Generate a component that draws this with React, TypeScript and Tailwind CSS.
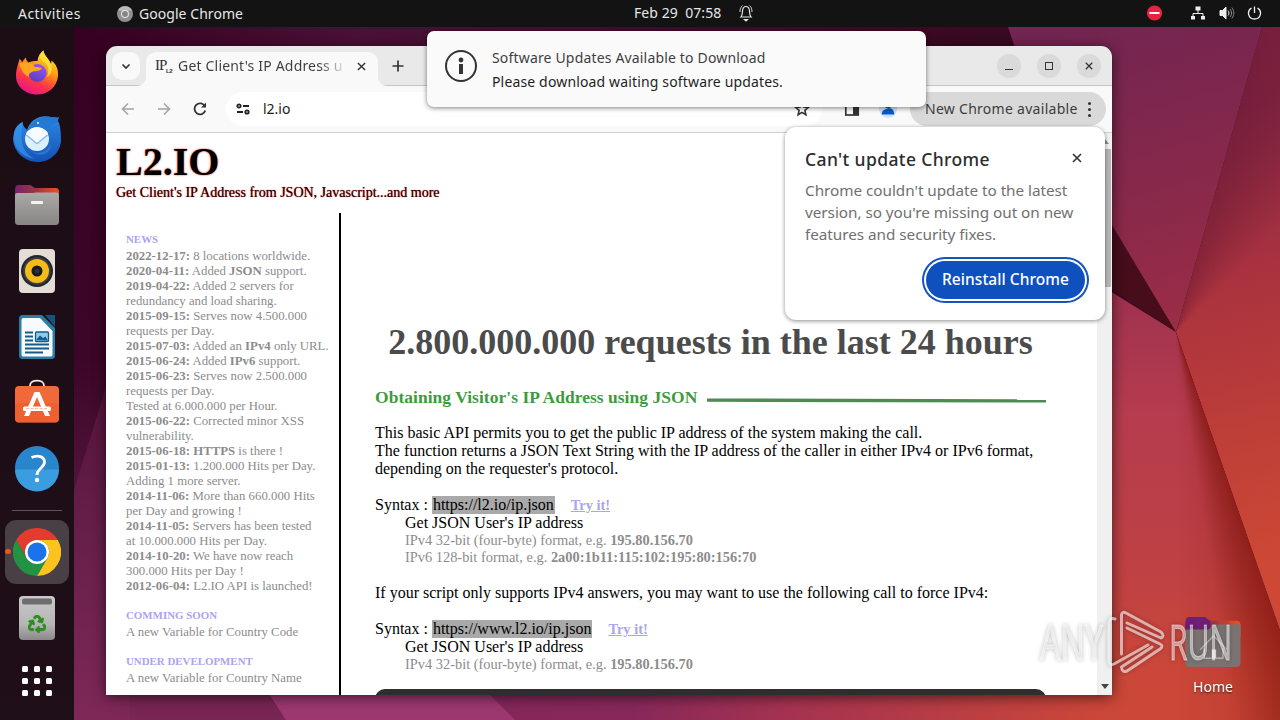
import React from 'react';
import { FaRecycle } from 'react-icons/fa';

interface NewsLine {
  date?: string;
  text: React.ReactNode;
}

const news: NewsLine[] = [
  { date: '2022-12-17:', text: ' 8 locations worldwide.' },
  { date: '2020-04-11:', text: <> Added <b>JSON</b> support.</> },
  { date: '2019-04-22:', text: ' Added 2 servers for' },
  { text: 'redundancy and load sharing.' },
  { date: '2015-09-15:', text: ' Serves now 4.500.000' },
  { text: 'requests per Day.' },
  { date: '2015-07-03:', text: <> Added an <b>IPv4</b> only URL.</> },
  { date: '2015-06-24:', text: <> Added <b>IPv6</b> support.</> },
  { date: '2015-06-23:', text: ' Serves now 2.500.000' },
  { text: 'requests per Day.' },
  { text: 'Tested at 6.000.000 per Hour.' },
  { date: '2015-06-22:', text: ' Corrected minor XSS' },
  { text: 'vulnerability.' },
  { date: '2015-06-18:', text: <> <b>HTTPS</b> is there !</> },
  { date: '2015-01-13:', text: ' 1.200.000 Hits per Day.' },
  { text: 'Adding 1 more server.' },
  { date: '2014-11-06:', text: ' More than 660.000 Hits' },
  { text: 'per Day and growing !' },
  { date: '2014-11-05:', text: ' Servers has been tested' },
  { text: 'at 10.000.000 Hits per Day.' },
  { date: '2014-10-20:', text: ' We have now reach' },
  { text: '300.000 Hits per Day !' },
  { date: '2012-06-04:', text: ' L2.IO API is launched!' },
];

const Wallpaper = () => (
  <>
    <svg className="absolute inset-0" width="1280" height="720" viewBox="0 0 1280 720">
      <defs>
        <linearGradient id="left" x1="0" y1="0" x2="0" y2="1">
          <stop offset="0" stopColor="#360021" />
          <stop offset="0.5" stopColor="#3c0628" />
          <stop offset="0.75" stopColor="#581a40" />
          <stop offset="1" stopColor="#7a2654" />
        </linearGradient>
        <linearGradient id="top" x1="0" y1="0" x2="1" y2="0">
          <stop offset="0" stopColor="#360021" />
          <stop offset="0.3" stopColor="#4c1036" />
          <stop offset="0.65" stopColor="#3f0c2c" />
          <stop offset="1" stopColor="#38091f" />
        </linearGradient>
        <linearGradient id="upper" gradientUnits="userSpaceOnUse" x1="1100" y1="27" x2="1190" y2="332">
          <stop offset="0" stopColor="#732551" />
          <stop offset="0.5" stopColor="#86284b" />
          <stop offset="1" stopColor="#9c2d46" />
        </linearGradient>
        <linearGradient id="right" gradientUnits="userSpaceOnUse" x1="1190" y1="120" x2="1290" y2="560">
          <stop offset="0" stopColor="#8c2846" />
          <stop offset="0.35" stopColor="#a8323f" />
          <stop offset="0.7" stopColor="#be3e38" />
          <stop offset="1" stopColor="#cd4935" />
        </linearGradient>
        <linearGradient id="lower" gradientUnits="userSpaceOnUse" x1="1140" y1="300" x2="1140" y2="680">
          <stop offset="0" stopColor="#a0324f" />
          <stop offset="0.3" stopColor="#b63c4e" />
          <stop offset="0.65" stopColor="#bd4045" />
          <stop offset="1" stopColor="#cb4738" />
        </linearGradient>
        <linearGradient id="bottom" x1="0" y1="0" x2="1" y2="0">
          <stop offset="0" stopColor="#85265a" />
          <stop offset="0.25" stopColor="#88285a" />
          <stop offset="0.5" stopColor="#a53350" />
          <stop offset="1" stopColor="#cb4738" />
        </linearGradient>
      </defs>
      <rect width="1280" height="720" fill="url(#left)" />
      <path d="M74 490L130 310V720H74z" fill="#8a2f63" fillOpacity="0.3" />
      <rect x="74" y="27" width="950" height="30" fill="url(#top)" />
      <path d="M1008 27H1262L1176 332L1060 180z" fill="url(#upper)" />
      <path d="M1262 27H1280V630L1176 332z" fill="url(#right)" />
      <path d="M1060 260L1176 332L1280 630V720H1060z" fill="url(#lower)" />
      <path d="M1100 205L1176 332L1100 282z" fill="#470d1b" />
      <rect x="480" y="690" width="622" height="30" fill="url(#bottom)" />
      <path d="M260 680H475L515 720H286z" fill="#9d3770" />
    </svg>
    {/* Fold shading around the vertex */}
    <div className="absolute top-[27px] left-[1100px] h-[693px] w-[180px] bg-[conic-gradient(from_0deg_at_76px_305px,transparent_15.700deg,rgba(75,12,40,0.35)_15.800deg,rgba(75,12,40,0)_45deg,transparent_160.700deg,rgba(125,18,8,0.7)_160.800deg,rgba(125,18,8,0.5)_165deg,rgba(125,18,8,0.1)_172deg,rgba(125,18,8,0)_180deg)]" />
  </>
);

const FirefoxIcon = () => (
  <svg width="48" height="48" viewBox="0 0 48 48">
    <defs>
      <linearGradient id="fx" x1="0.8" y1="0" x2="0.3" y2="1">
        <stop offset="0" stopColor="#fff44f" />
        <stop offset="0.4" stopColor="#ff980e" />
        <stop offset="0.7" stopColor="#ff3647" />
        <stop offset="1" stopColor="#e31587" />
      </linearGradient>
      <linearGradient id="fxglobe" x1="0.8" y1="0" x2="0.2" y2="1">
        <stop offset="0" stopColor="#9059ff" />
        <stop offset="1" stopColor="#5b3bb5" />
      </linearGradient>
    </defs>
    <path d="M3 27C3 20 5 16 6.500 10C8 11 8.500 12 9 13.500C11 10.500 12 9.500 13 8.500C13 11 14 12 15.500 13.500C18 12 22 12 24.500 12C25 7 27 4 30.500 1.500C31 7 36 9 38 15C38.500 13.500 38.500 12.500 38.500 11.500C43 15 45.500 20 45 27C44 38 35 45.500 24 45.500C12 45.500 3 37 3 27z" fill="url(#fx)" />
    <circle cx="24.500" cy="24" r="9" fill="url(#fxglobe)" />
    <path d="M6.500 14C11 13 19 13 22 18C26 18 28 18.500 29 19.500C27 22 23 22 20 22.500C17 24 15 25 16 28C11 26 7 20 6.500 14z" fill="#ffa51f" />
    <path d="M29 12C35 14 37 21 34 28C38 26 40 20 38 15C35 9 31 7 30.500 1.500C27 4 26 8 29 12z" fill="#ffe23a" fillOpacity="0.85" />
  </svg>
);

const ThunderbirdIcon = () => (
  <svg width="48" height="48" viewBox="0 0 48 48">
    <defs>
      <linearGradient id="tb" x1="0.4" y1="0" x2="0.5" y2="1">
        <stop offset="0" stopColor="#2f8ce6" />
        <stop offset="1" stopColor="#1552b5" />
      </linearGradient>
    </defs>
    <path d="M1 18C2 13 5 9 10 7C9 10 12 13 14 15C17 5 27 -1 38 2C42 2 44 3 46 2.500C45 5 44 6 46 8C48 14 48 22 48 26C47 38 37 47 25 47C11 47 0 36 0 23z" fill="url(#tb)" />
    <path d="M17 14C19 6 27 1 38 2C42 2 44 3 46 2.500C45 5 44 6 46 8C39 6 36 14 34 16C28 10 22 12 17 14z" fill="#2379d4" />
    <path d="M1 18C0 30 5 41 22 44C10 38 6 28 10 7C5 9 2 13 1 18z" fill="#3b9bee" fillOpacity="0.6" />
    <circle cx="24" cy="24" r="12" fill="#dcefff" />
    <path d="M13 19L24 29L35 19C34 15 29 12.500 24 12.500S15 15 13 19z" fill="#f6fbff" />
    <path d="M13.500 20L23 28C23.600 28.500 24.400 28.500 25 28L34.500 20" fill="none" stroke="#8abdec" strokeWidth="1.600" />
    <path d="M18 36C25 40 34 37 38 29C38 38 28 44 18 36z" fill="#2a76d8" />
    <circle cx="25" cy="8" r="1" fill="#fff" />
  </svg>
);

const FolderIcon = ({ home }: { home?: boolean }) => (
  <svg width={home ? 60 : 48} height={home ? 60 : 48} viewBox="0 0 48 48">
    <defs>
      <linearGradient id="tabs" x1="0" y1="0" x2="1" y2="0">
        <stop offset="0" stopColor="#77216f" />
        <stop offset="0.5" stopColor="#a03640" />
        <stop offset="1" stopColor="#e95420" />
      </linearGradient>
      <linearGradient id="folder" x1="0" y1="0" x2="0" y2="1">
        <stop offset="0" stopColor="#aaa9a7" />
        <stop offset="1" stopColor="#878684" />
      </linearGradient>
    </defs>
    <path d="M2 10C2 5 3 4 6 4H17C19 4 20 7 23 7H42C45 7 46 8 46 11V20H2z" fill="url(#tabs)" />
    {home && <path d="M2 10C2 5 3 4 6 4H17C19 4 20 7 22 7V14H2z" fill="#6d1f73" />}
    <path d={home ? 'M2 14H20C22 14 22 10 25 10H46V40C46 43 45 44 42 44H6C3 44 2 43 2 40z' : 'M2 15C2 12 3 12 6 12H20C21 12 22 11.500 23 11.500H42C45 11.500 46 12 46 15V40C46 43 45 44 42 44H6C3 44 2 43 2 40z'} fill={home ? '#7a7372' : 'url(#folder)'} />
    {home ? (
      <>
        <path d="M14 30L24.500 19L35 30M17 29V37H32V29" fill="none" stroke="#d8d0cf" strokeOpacity="0.7" strokeWidth="1.200" />
        <rect x="23" y="30" width="3.500" height="7" fill="#e8e0df" />
      </>
    ) : (
      <rect x="18" y="20" width="12" height="3" rx="0.800" fill="#f3f3f3" />
    )}
  </svg>
);

const RhythmboxIcon = () => (
  <svg width="48" height="48" viewBox="0 0 48 48">
    <rect x="6" y="2" width="36" height="44" rx="4" fill="#e3ddd5" />
    <circle cx="24" cy="24" r="16" fill="#24262b" />
    <circle cx="24" cy="24" r="13.800" fill="#3c3f46" />
    <circle cx="24" cy="24" r="12" fill="#f5bb1b" />
    <circle cx="24" cy="24" r="5.500" fill="#17191d" />
    <circle cx="24" cy="24" r="2.500" fill="#2d3035" />
  </svg>
);

const WriterIcon = () => (
  <svg width="48" height="48" viewBox="0 0 48 48">
    <path d="M10 2H29L42 15V42C42 45 41 46 38 46H10C7 46 6 45 6 42V6C6 3 7 2 10 2z" fill="#2b7ca6" />
    <path d="M32 2H42V14z" fill="#16527a" />
    <path d="M11 5H27L39.500 18V41C39.500 43 39 43.500 37 43.500H11C9 43.500 8.500 43 8.500 41V8C8.500 5.500 9 5 11 5z" fill="#f8fbfd" />
    <path d="M12 19.500H20M12 23.500H20M12 27.500H20M12 31.500H36M12 35.500H36M12 39.500H30" stroke="#175b86" strokeWidth="1.800" />
    <rect x="22.500" y="19" width="13" height="9.500" rx="1" fill="#8ecbf0" stroke="#175b86" strokeWidth="1.300" />
    <path d="M23 27L27 22.500L30 25L32.500 23.500L35 27.500z" fill="#175b86" />
  </svg>
);

const SoftwareIcon = () => (
  <svg className="-mt-[2px]" width="48" height="48" viewBox="0 0 48 48">
    <path d="M17 10V7.500C17 1 31 1 31 7.500V10" fill="none" stroke="#efe6e0" strokeWidth="1.800" />
    <rect x="2" y="8" width="44" height="36.500" rx="4" fill="#f0693a" />
    <rect x="2" y="25" width="44" height="19.500" rx="4" fill="#e95b28" fillOpacity="0.6" />
    <path d="M21.500 14H26.500L37 38H32L24 19L16 38H11z" fill="#fff" />
    <rect x="10" y="28.500" width="28" height="4.500" rx="1.500" fill="#fff" />
    <path d="M13 30.700H35" stroke="#f0a98a" strokeWidth="0.900" strokeDasharray="3 1.500" />
  </svg>
);

const HelpIcon = () => (
  <svg className="-mt-[2px]" width="48" height="48" viewBox="0 0 48 48">
    <circle cx="24" cy="24" r="22" fill="#2a86cc" />
    <path d="M2 25.500A22 22 0 0 0 46 25.500z" fill="#3a9de0" />
    <path d="M18.500 13.500C25 10.500 31.500 12.500 31.500 18C31.500 24 24 24 24 31" fill="none" stroke="#fff" strokeWidth="2.800" />
    <circle cx="24" cy="36" r="2.200" fill="#fff" />
  </svg>
);

const ChromeIcon = () => (
  <svg width="48" height="48" viewBox="0 0 48 48">
    <path d="M24 12L44.800 12A24 24 0 0 0 3.200 12L13.600 30A12 12 0 0 1 24 12z" fill="#e33b2e" />
    <path d="M44.800 12A24 24 0 0 1 24 48L34.400 30A12 12 0 0 0 24 12z" fill="#fcc31e" />
    <path d="M3.200 12A24 24 0 0 0 24 48L34.400 30A12 12 0 0 1 13.600 30z" fill="#229342" />
    <circle cx="24" cy="24" r="12" fill="#fff" />
    <circle cx="24" cy="24" r="9.500" fill="#1a73e8" />
  </svg>
);

const TrashIcon = () => (
  <div className="relative flex h-12 w-12 justify-center">
    <svg width="48" height="48" viewBox="0 0 48 48">
      <defs>
        <linearGradient id="bin" x1="0" y1="0" x2="0" y2="1">
          <stop offset="0" stopColor="#c9c9c9" />
          <stop offset="0.65" stopColor="#b5b5b5" />
          <stop offset="1" stopColor="#8b878a" />
        </linearGradient>
      </defs>
      <rect x="6" y="2" width="36" height="44" rx="4" fill="url(#bin)" />
      <rect x="9" y="4.500" width="30" height="6" rx="2" fill="#6e6e6e" />
    </svg>
    <FaRecycle className="absolute top-[21px] text-[18px] text-[#2e8b22] [stroke-width:24] [stroke:currentColor]" />
  </div>
);

const DockItem = ({ children }: { children: React.ReactNode }) => (
  <div className="flex h-[66px] w-full shrink-0 items-center justify-center">{children}</div>
);

const Dock = () => (
  <div className="flex w-[74px] shrink-0 flex-col items-center bg-[#1a0e15]/95 pt-[13px]">
    <DockItem><FirefoxIcon /></DockItem>
    <DockItem><ThunderbirdIcon /></DockItem>
    <DockItem><FolderIcon /></DockItem>
    <DockItem><RhythmboxIcon /></DockItem>
    <DockItem><WriterIcon /></DockItem>
    <DockItem><SoftwareIcon /></DockItem>
    <DockItem><HelpIcon /></DockItem>
    <div className="flex h-[17px] w-[50px] shrink-0 items-center">
      <div className="h-px w-full bg-[#5d545a]" />
    </div>
    <DockItem>
      <div className="relative flex h-16 w-16 items-center justify-center rounded-[11px] bg-[#484044]">
        <div className="absolute top-[29px] left-0 h-[5px] w-[6px] rounded-full bg-[#e95420]" />
        <ChromeIcon />
      </div>
    </DockItem>
    <DockItem><TrashIcon /></DockItem>
    <DockItem>
      <div className="mb-[7px] grid grid-cols-3 gap-[6px]">
        {Array.from({ length: 9 }, (_, i) => (
          <div key={i} className="h-[6px] w-[6px] rounded-[1.500px] bg-white" />
        ))}
      </div>
    </DockItem>
  </div>
);

const TopBar = () => (
  <div className="relative flex h-[27px] shrink-0 items-center bg-[#131313] text-[14px] leading-[26px] text-[#e6e6e6]">
    <span className="ml-[18px] w-[99px] tracking-[0.450px]">Activities</span>
    <svg width="16" height="16" viewBox="0 0 16 16">
      <circle cx="8" cy="8" r="8" fill="#8f8f8f" />
      <path d="M1 4.500A8 8 0 0 1 15 4.500L8 5z" fill="#b9b9b9" />
      <circle cx="8" cy="8" r="4" fill="#e2e2e2" />
      <circle cx="8" cy="8" r="2.900" fill="#858585" />
    </svg>
    <span className="ml-[6px] tracking-[0.05px]">Google Chrome</span>
    <div className="-mt-px ml-[391px] flex items-center">
      <span className="whitespace-pre tracking-[0.06px]">Feb 29  07:58</span>
      <svg className="ml-[17px]" width="16" height="18" viewBox="0 0 16 18" fill="none" stroke="#e6e6e6" strokeWidth="1.200">
        <path d="M3 13C4.500 11.500 4.300 9 4.500 7C4.800 3.500 6.500 2.500 8 2.500S11.200 3.500 11.500 7C11.700 9 11.500 11.500 13 13z" />
        <path d="M2 8C2 5 2.800 3 4.500 1.500M14 8C14 5 13.200 3 11.500 1.500" strokeWidth="0.900" />
        <path d="M6.500 15.500H9.500L8 17z" fill="#e6e6e6" />
      </svg>
    </div>
    <div className="-mt-px ml-auto flex items-center pr-[18px]">
      <svg width="16" height="16" viewBox="0 0 16 16">
        <circle cx="8.500" cy="8" r="7.600" fill="#e6243f" />
        <rect x="3.500" y="7" width="10" height="2" fill="#fff" />
      </svg>
      <svg className="ml-[28px]" width="16" height="16" viewBox="0 0 16 16" fill="#eee">
        <path d="M5.500 1.500h5v4h-5zM1 11h4v3.500H1zM11 11h4v3.500h-4z" />
        <path d="M8 5V8.500M3 11.500V8.500H13V11.500" fill="none" stroke="#eee" />
      </svg>
      <svg className="ml-[13px]" width="16" height="16" viewBox="0 0 16 16" fill="none" stroke="#eee">
        <path d="M1 5.500H3.500L7 2V14L3.500 10.500H1z" fill="#eee" />
        <path d="M9 5.500C10.300 7 10.300 9 9 10.500" />
        <path d="M11 4C13 6.500 13 9.500 11 12M12.800 2.500C15.500 6 15.500 10 12.800 13.500" stroke="#888" />
      </svg>
      <svg className="ml-[12px]" width="15" height="16" viewBox="0 0 15 16" fill="none" stroke="#eee" strokeWidth="1.300">
        <path d="M7.500 1.500V8M4.500 3C-0.500 6 1 14 7.500 14S15.500 6 10.500 3" />
      </svg>
    </div>
  </div>
);

const Cross = ({ size = 10 }: { size?: number }) => (
  <svg width={size} height={size} viewBox="0 0 10 10" stroke="#333" strokeWidth="1.600">
    <path d="M1 1L9 9M9 1L1 9" />
  </svg>
);

const TabStrip = () => (
  <div className="flex h-[40px] shrink-0 items-end border-b border-[#c6c6c6] bg-[#e9e9e9] pl-[6px]">
    <div className="mb-[5px] flex h-[28px] w-[28px] items-center justify-center rounded-[10px] bg-[#f9f9f9]">
      <svg width="10" height="7" viewBox="0 0 10 7" fill="none" stroke="#333" strokeWidth="1.700">
        <path d="M1.500 1.500L5 5L8.500 1.500" />
      </svg>
    </div>
    <div className="relative -mb-px ml-[6px] flex h-[34px] w-[232px] items-center rounded-t-[10px] bg-[#f9f9f9] pb-[6px]">
      <svg className="absolute bottom-0 -left-[9px]" width="9" height="9" viewBox="0 0 9 9">
        <path d="M9 0V9H0C5 9 9 5 9 0z" fill="#f9f9f9" />
      </svg>
      <svg className="absolute -right-[9px] bottom-0" width="9" height="9" viewBox="0 0 9 9">
        <path d="M0 0V9H9C4 9 0 5 0 0z" fill="#f9f9f9" />
      </svg>
      <div className="ml-[9px] flex h-[16px] w-[17px] font-['Liberation_Serif',serif] text-[#333]">
        <span className="w-[11px] text-[15px] leading-[15px] -tracking-[1px]">IP</span>
        <span className="mt-[10px] w-[6px] font-['Liberation_Sans',sans-serif] text-[6px] leading-[6px] font-bold -tracking-[0.5px]">L2</span>
      </div>
      <span className="ml-[6px] w-[166px] overflow-hidden bg-linear-to-r from-[#3c3c3c] from-85% to-[#3c3c3c]/10 bg-clip-text text-[14px] leading-[20px] tracking-[0.189px] whitespace-nowrap text-transparent">
        Get Client's IP Address u
      </span>
      <span className="ml-[13px]"><Cross size={9} /></span>
    </div>
    <svg className="mb-[13px] ml-[14px]" width="12" height="12" viewBox="0 0 12 12" stroke="#333" strokeWidth="1.700">
      <path d="M6 0.500V11.500M0.500 6H11.500" />
    </svg>
    <div className="mr-[11px] mb-[7px] ml-auto flex gap-4">
      <div className="flex h-6 w-6 items-center justify-center rounded-full bg-[#dadada]">
        <div className="mt-[6px] h-px w-[8px] bg-[#333]" />
      </div>
      <div className="flex h-6 w-6 items-center justify-center rounded-full bg-[#dadada]">
        <div className="h-[8px] w-[8px] border border-[#333]" />
      </div>
      <div className="flex h-6 w-6 items-center justify-center rounded-full bg-[#dadada]">
        <Cross size={8} />
      </div>
    </div>
  </div>
);

const Toolbar = () => (
  <div className="flex h-[47px] shrink-0 items-center border-b border-[#cfcfcf] bg-[#f9f9f9] pl-[15px]">
    <svg width="14" height="14" viewBox="0 0 14 14" fill="none" stroke="#a3a3a3" strokeWidth="1.600">
      <path d="M13 7H2M7 1.500L1.500 7L7 12.500" />
    </svg>
    <svg className="ml-[22px]" width="14" height="14" viewBox="0 0 14 14" fill="none" stroke="#a3a3a3" strokeWidth="1.600">
      <path d="M1 7H12M7 1.500L12.500 7L7 12.500" />
    </svg>
    <svg className="ml-[22px]" width="14" height="14" viewBox="0 0 14 14" fill="none" stroke="#333" strokeWidth="1.800">
      <path d="M12 4.500A5.500 5.500 0 1 0 12.300 8.500" />
      <path d="M13 0.500V5.500H8z" fill="#333" stroke="none" />
    </svg>
    <div className="ml-[19px] flex h-[34px] w-[596px] items-center rounded-full bg-white pl-[10px]">
      <svg width="14" height="12" viewBox="0 0 14 12" fill="none" stroke="#222" strokeWidth="1.800">
        <circle cx="3" cy="3" r="1.700" />
        <path d="M7 3H13M1 9H7" />
        <circle cx="11" cy="9" r="1.700" />
      </svg>
      <span className="ml-[13px] text-[14px] leading-[20px] text-[#1c1c1c]">l2.io</span>
      <svg className="mr-[12px] ml-auto" width="16" height="16" viewBox="0 0 16 16" fill="none" stroke="#333" strokeWidth="1.600">
        <path d="M8 1.800L9.800 6L14.300 6.400L10.900 9.300L11.900 13.800L8 11.400L4.100 13.800L5.100 9.300L1.700 6.400L6.200 6z" />
      </svg>
    </div>
    <svg className="ml-[22px]" width="16" height="16" viewBox="0 0 16 16">
      <rect x="1.800" y="2" width="12.400" height="12" fill="none" stroke="#333" strokeWidth="1.700" />
      <rect x="9" y="2" width="5" height="12" fill="#333" />
    </svg>
    <svg className="ml-[19px]" width="18" height="18" viewBox="0 0 18 18">
      <circle cx="9" cy="9" r="9" fill="#cfe2fb" />
      <circle cx="9" cy="5.500" r="3" fill="#0b57d0" />
      <path d="M2.800 14.500C2.800 10.500 5 9.500 9 8.500S15.200 10.500 15.200 14.500z" fill="#0b57d0" />
    </svg>
    <div className="ml-[13px] flex h-[34px] w-[196px] items-center rounded-full bg-[#d9d9d9] pl-[15px]">
      <span className="text-[14px] leading-[20px] tracking-[0.280px] whitespace-nowrap text-[#3c3c3c]">New Chrome available</span>
      <div className="ml-[10px] flex flex-col gap-[3px]">
        <div className="h-[3px] w-[3px] rounded-full bg-[#333]" />
        <div className="h-[3px] w-[3px] rounded-full bg-[#333]" />
        <div className="h-[3px] w-[3px] rounded-full bg-[#333]" />
      </div>
    </div>
  </div>
);

const NewsColumn = () => (
  <div className="ml-[10px] w-[225px] shrink-0 border-r-2 border-black pt-5 pl-[10px] text-[12.800px] leading-[15px] whitespace-nowrap text-[#8c8c8c]">
    <h3 className="mb-[3px] text-[10.900px] leading-[13px] font-bold text-[#a9a3f3]">NEWS</h3>
    {news.map((line, i) => (
      <p key={i} className="whitespace-pre">{line.date && <b>{line.date}</b>}{line.text}</p>
    ))}
    <h3 className="mt-[15px] mb-[3px] text-[10.900px] leading-[13px] font-bold text-[#a9a3f3]">COMMING SOON</h3>
    <p>A new Variable for Country Code</p>
    <h3 className="mt-[15px] mb-[3px] text-[10.900px] leading-[13px] font-bold text-[#a9a3f3]">UNDER DEVELOPMENT</h3>
    <p>A new Variable for Country Name</p>
  </div>
);

const Syntax = ({ url, v6 }: { url: string; v6?: string }) => (
  <div className="mt-[18px] whitespace-nowrap">
    <div className="flex h-[18px]">
      <span className="whitespace-pre">Syntax : </span>
      <span className="bg-[#a9a9a9] px-px">{url}</span>
      <a className="ml-[16px] text-[14.400px] font-bold text-[#a9a3f3] underline">Try it!</a>
    </div>
    <div className="pl-[30px]">
      <div>Get JSON User's IP address</div>
      <div className="text-[14.400px] leading-[17px] text-[#8c8c8c]">
        <div>IPv4 32-bit (four-byte) format, e.g. <b>195.80.156.70</b></div>
        {v6 && <div>IPv6 128-bit format, e.g. <b>{v6}</b></div>}
      </div>
    </div>
  </div>
);

const PageContent = () => (
  <div className="flex min-w-0 flex-1 flex-col overflow-hidden bg-white pt-[7px] font-['Liberation_Serif',serif] text-black">
    <h1 className="ml-[10px] text-[40px] leading-[44px] font-bold [text-shadow:0_0_2px_#e02010]">L2.IO</h1>
    <p className="mt-px ml-[10px] text-[14px] leading-[16px] text-[#2c0000] [text-shadow:0_0_1px_#c00000]">
      Get Client's IP Address from JSON, Javascript...and more
    </p>
    <div className="mt-[12px] flex min-h-0 flex-1">
      <NewsColumn />
      <div className="ml-[34px] w-[671px] shrink-0 pt-[109px] text-[16px] leading-[18px]">
        <h2 className="text-center text-[36px] leading-[40px] font-bold whitespace-nowrap text-[#4b4b4b]">
          2.800.000.000 requests in the last 24 hours
        </h2>
        <div className="mt-[25px] flex h-5 items-center">
          <h3 className="w-[332px] text-[17.470px] leading-[20px] font-bold tracking-[0.050px] whitespace-nowrap text-[#3d9b3d]">
            Obtaining Visitor's IP Address using JSON
          </h3>
          <svg className="mt-[7px]" width="339" height="5" viewBox="0 0 339 5">
            <path d="M0 0.500L339 1.200V4.500L0 3.800z" fill="#4f8a55" />
          </svg>
        </div>
        <p className="mt-[17px] whitespace-nowrap">
          This basic API permits you to get the public IP address of the system making the call.
          <br />
          The function returns a JSON Text String with the IP address of the caller in either IPv4 or IPv6 format,
          <br />
          depending on the requester's protocol.
        </p>
        <Syntax url="https://l2.io/ip.json" v6="2a00:1b11:115:102:195:80:156:70" />
        <p className="mt-[18px] whitespace-nowrap">
          If your script only supports IPv4 answers, you may want to use the following call to force IPv4:
        </p>
        <Syntax url="https://www.l2.io/ip.json" />
        <div className="mt-4 h-[40px] rounded-[10px] bg-[#2d2f2e]" />
      </div>
    </div>
  </div>
);

const Scrollbar = () => (
  <div className="flex w-[15px] shrink-0 flex-col items-center bg-[#f0f0f0] py-[6px]">
    <svg width="8" height="5" viewBox="0 0 8 5"><path d="M0 5L4 0L8 5z" fill="#8a8a8a" /></svg>
    <div className="mt-[5px] h-[138px] w-[13px] bg-[#b6b6b6]" />
    <svg className="mt-auto" width="8" height="5" viewBox="0 0 8 5"><path d="M0 0L4 5L8 0z" fill="#444" /></svg>
  </div>
);

const UpdateBubble = () => (
  <div className="absolute top-[127px] left-[785px] flex h-[193px] w-[320px] flex-col rounded-[11px] bg-white pt-[21px] pr-[20px] pl-[20px] shadow-[0_1px_4px_rgba(0,0,0,0.45)]">
    <div className="flex items-start justify-between">
      <h2 className="text-[17.500px] leading-[22px] font-medium tracking-[0.380px] text-[#2d2d2d]">Can't update Chrome</h2>
      <span className="mt-[5px] mr-[3px] flex"><Cross /></span>
    </div>
    <p className="mt-[9px] text-[15.300px] leading-[22px] -tracking-[0.040px] whitespace-nowrap text-[#707070]">
      Chrome couldn't update to the latest
      <br />
      version, so you're missing out on new
      <br />
      features and security fixes.
    </p>
    <button className="mt-[16px] flex h-[38px] w-[159px] items-center justify-center self-end rounded-full bg-[#0f50bf] text-[15.500px] font-medium tracking-[0.050px] text-white ring-2 ring-[#1553bd] ring-offset-2">
      Reinstall Chrome
    </button>
  </div>
);

const Notification = () => (
  <div className="absolute top-[31px] left-[427px] flex h-[76px] w-[499px] items-center rounded-[7px] bg-[#fafafa] pl-[17px] shadow-[0_1px_5px_rgba(0,0,0,0.5)]">
    <svg className="mb-[6px]" width="34" height="34" viewBox="0 0 34 34">
      <circle cx="17" cy="17" r="15" fill="none" stroke="#333" strokeWidth="2" />
      <circle cx="17" cy="11" r="2.400" fill="#333" />
      <rect x="15" y="15" width="4" height="10" fill="#333" />
    </svg>
    <div className="mt-[2px] ml-[14px] text-[14px] leading-[24px] whitespace-nowrap">
      <div className="tracking-[0.17px] text-[#3f3f3f]">Software Updates Available to Download</div>
      <div className="tracking-[0.150px] text-[#1f1f1f]">Please download waiting software updates.</div>
    </div>
  </div>
);

const Watermark = () => (
  <svg className="absolute top-[600px] left-[1030px]" width="250" height="90" viewBox="0 0 250 90">
    <g
      className="font-['Open_Sans',sans-serif] text-[50px] drop-shadow-[0_0_2px_rgba(0,0,0,0.45)]"
      fill="#fff"
      fillOpacity="0.5"
      stroke="#fff"
      strokeOpacity="0.45"
      strokeWidth="1"
    >
      <text x="10" y="60" textLength="63" lengthAdjust="spacingAndGlyphs">ANY</text>
      <text x="139" y="60" textLength="63" lengthAdjust="spacingAndGlyphs">RUN</text>
      <g fill="none" strokeLinejoin="round" strokeLinecap="round" strokeOpacity="0.6" strokeWidth="3">
        <path d="M91.500 54V15Q92 11 96 13L131 32Q135 36 131 38L97 23" />
        <path d="M97 28L130 44Q134 46 130 49L97 71Q92 73 91.500 67L122 47" />
        <path d="M85 19Q79 17 79 24V62Q80 66 84 64L118 45" />
      </g>
    </g>
  </svg>
);

export default function App() {
  return (
    <div className="relative flex h-[720px] w-[1280px] flex-col overflow-hidden font-['Noto_Sans',sans-serif]">
      <Wallpaper />
      <TopBar />
      <div className="relative flex min-h-0 flex-1">
        <Dock />
        {/* Browser window */}
        <div className="mt-[19px] ml-[32px] flex h-[649px] w-[1006px] flex-col overflow-hidden rounded-t-[11px] shadow-[0_2px_14px_rgba(0,0,0,0.6)]">
          <TabStrip />
          <Toolbar />
          <div className="flex min-h-0 flex-1">
            <PageContent />
            <Scrollbar />
          </div>
        </div>
      </div>
      {/* Desktop shortcut */}
      <div className="absolute top-[612px] left-[1173px] flex w-[80px] flex-col items-center">
        <FolderIcon home />
        <span className="mt-[5px] text-[14px] leading-[20px] text-white [text-shadow:0_1px_2px_rgba(0,0,0,0.7)]">Home</span>
      </div>
      <UpdateBubble />
      <Notification />
      <Watermark />
    </div>
  );
}
